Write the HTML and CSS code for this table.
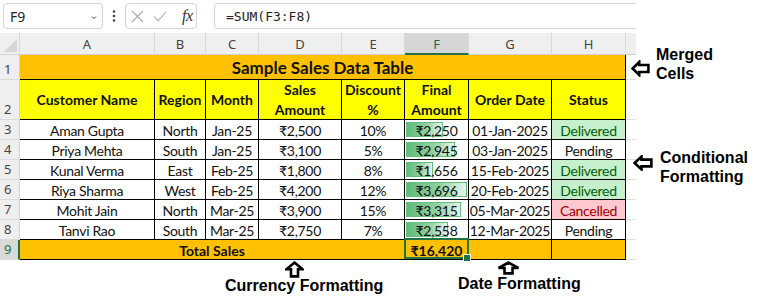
FILE: index.html
```html
<!DOCTYPE html>
<html>
<head>
<meta charset="utf-8">
<link rel="stylesheet" href="styles.css">
</head>
<body>
<div class="page">
  <div class="excel">
    <div class="fbar">
      <div class="namebox">
        <span class="nb-text">F9</span>
        <svg class="nb-caret" width="6" height="5" viewBox="0 0 6 5"><path d="M1 1.5 L3 3.5 L5 1.5" fill="none" stroke="#444" stroke-width="1"/></svg>
      </div>
      <div class="kebab">
        <svg width="4" height="12" viewBox="0 0 4 12"><circle cx="2" cy="1.5" r="1.3" fill="#444"/><circle cx="2" cy="6" r="1.3" fill="#444"/><circle cx="2" cy="10.5" r="1.3" fill="#444"/></svg>
      </div>
      <div class="fxbox">
        <svg class="ic-x" width="13" height="13" viewBox="0 0 13 13"><path d="M1 1 L12 12 M12 1 L1 12" stroke="#a8a8a8" stroke-width="1.1" fill="none"/></svg>
        <svg class="ic-ok" width="14" height="11" viewBox="0 0 14 11"><path d="M1 5.5 L5 9.8 L13 1" stroke="#a8a8a8" stroke-width="1.1" fill="none"/></svg>
        <span class="fx">fx</span>
      </div>
      <div class="formula">=SUM(F3:F8)</div>
    </div>

    <div class="sheet">
      <!-- column headers -->
      <div class="corner"><svg width="13" height="13" viewBox="0 0 13 13"><path d="M13 0 L13 13 L0 13 Z" fill="#d6d6d6"/></svg></div>
      <div class="ch">A</div>
      <div class="ch">B</div>
      <div class="ch">C</div>
      <div class="ch">D</div>
      <div class="ch">E</div>
      <div class="ch ch-sel">F</div>
      <div class="ch">G</div>
      <div class="ch">H</div>
      <div class="ch ch-i"></div>

      <!-- row 1 -->
      <div class="rh">1</div>
      <div class="title">Sample Sales Data Table</div>
      <div class="gi"></div>

      <!-- row 2 -->
      <div class="rh">2</div>
      <div class="c hd">Customer Name</div>
      <div class="c hd">Region</div>
      <div class="c hd">Month</div>
      <div class="c hd">Sales<br>Amount</div>
      <div class="c hd">Discount<br>%</div>
      <div class="c hd">Final<br>Amount</div>
      <div class="c hd">Order Date</div>
      <div class="c hd">Status</div>
      <div class="gi"></div>

      <!-- row 3 -->
      <div class="rh">3</div>
      <div class="c d">Aman Gupta</div>
      <div class="c d">North</div>
      <div class="c d">Jan-25</div>
      <div class="c d">₹2,500</div>
      <div class="c d">10%</div>
      <div class="c d fb"><span class="bar" style="width:37px"></span><span class="val">₹2,250</span></div>
      <div class="c d">01-Jan-2025</div>
      <div class="c d ok">Delivered</div>
      <div class="gi"></div>

      <!-- row 4 -->
      <div class="rh">4</div>
      <div class="c d">Priya Mehta</div>
      <div class="c d">South</div>
      <div class="c d">Jan-25</div>
      <div class="c d">₹3,100</div>
      <div class="c d">5%</div>
      <div class="c d fb"><span class="bar" style="width:49px"></span><span class="val">₹2,945</span></div>
      <div class="c d">03-Jan-2025</div>
      <div class="c d">Pending</div>
      <div class="gi"></div>

      <!-- row 5 -->
      <div class="rh">5</div>
      <div class="c d">Kunal Verma</div>
      <div class="c d">East</div>
      <div class="c d">Feb-25</div>
      <div class="c d">₹1,800</div>
      <div class="c d">8%</div>
      <div class="c d fb"><span class="bar" style="width:27px"></span><span class="val">₹1,656</span></div>
      <div class="c d">15-Feb-2025</div>
      <div class="c d ok">Delivered</div>
      <div class="gi"></div>

      <!-- row 6 -->
      <div class="rh">6</div>
      <div class="c d">Riya Sharma</div>
      <div class="c d">West</div>
      <div class="c d">Feb-25</div>
      <div class="c d">₹4,200</div>
      <div class="c d">12%</div>
      <div class="c d fb"><span class="bar" style="width:61px"></span><span class="val">₹3,696</span></div>
      <div class="c d">20-Feb-2025</div>
      <div class="c d ok">Delivered</div>
      <div class="gi"></div>

      <!-- row 7 -->
      <div class="rh">7</div>
      <div class="c d">Mohit Jain</div>
      <div class="c d">North</div>
      <div class="c d">Mar-25</div>
      <div class="c d">₹3,900</div>
      <div class="c d">15%</div>
      <div class="c d fb"><span class="bar" style="width:55px"></span><span class="val">₹3,315</span></div>
      <div class="c d">05-Mar-2025</div>
      <div class="c d bad">Cancelled</div>
      <div class="gi"></div>

      <!-- row 8 -->
      <div class="rh">8</div>
      <div class="c d">Tanvi Rao</div>
      <div class="c d">South</div>
      <div class="c d">Mar-25</div>
      <div class="c d">₹2,750</div>
      <div class="c d">7%</div>
      <div class="c d fb"><span class="bar" style="width:42px"></span><span class="val">₹2,558</span></div>
      <div class="c d">12-Mar-2025</div>
      <div class="c d">Pending</div>
      <div class="gi"></div>

      <!-- row 9 -->
      <div class="rh rh-sel">9</div>
      <div class="c tot">Total Sales</div>
      <div class="c tsel">₹16,420</div>
      <div class="c torg"></div>
      <div class="c torg"></div>
      <div class="gi"></div>
    </div>
  </div>

  <!-- annotations -->
  <div class="note note-merged">Merged<br>Cells</div>
  <svg class="arrow arrow-merged" width="19" height="17" viewBox="0 0 19 17"><polygon points="1.6,8.5 8.2,2 8.2,5 17.4,5 17.4,12 8.2,12 8.2,15" fill="#fff" stroke="#000" stroke-width="2.6" stroke-linejoin="miter"/></svg>

  <div class="note note-cond">Conditional<br>Formatting</div>
  <svg class="arrow arrow-cond" width="20" height="16" viewBox="0 0 20 16"><polygon points="1.6,8 8.5,1.6 8.5,4.6 18.4,4.6 18.4,11.4 8.5,11.4 8.5,14.4" fill="#fff" stroke="#000" stroke-width="2.6"/></svg>

  <svg class="arrow arrow-cur" width="19" height="17" viewBox="0 0 19 17"><polygon points="9.5,1.6 17.4,8.2 13,8.2 13,15.4 6,15.4 6,8.2 1.6,8.2" fill="#fff" stroke="#000" stroke-width="2.6"/></svg>
  <div class="note note-cur">Currency Formatting</div>

  <svg class="arrow arrow-date" width="23" height="14" viewBox="0 0 23 14"><polygon points="11.5,1.6 21.4,7 15.5,7 15.5,12.4 7.5,12.4 7.5,7 1.6,7" fill="#fff" stroke="#000" stroke-width="2.6"/></svg>
  <div class="note note-date">Date Formatting</div>
</div>
</body>
</html>
```

FILE: styles.css
```css
* { box-sizing: border-box; }

html, body {
  margin: 0;
  padding: 0;
  background: #fff;
}

.page {
  position: relative;
  width: 757px;
  height: 301px;
  overflow: hidden;
  background: #fff;
}

.excel {
  width: 636px;
  overflow: hidden;
  background: #fff;
  padding-bottom: 2px;
}

/* ---------- formula bar ---------- */
.fbar {
  height: 33px;
  display: flex;
  align-items: flex-start;
  padding-top: 3px;
  font-family: "Noto Sans", "Open Sans", sans-serif;
  color: #222;
}

.fbar > * { flex-shrink: 0; }

.namebox {
  margin-left: 3px;
  width: 100px;
  height: 26px;
  border: 1px solid #d4d4d4;
  border-radius: 4px;
  display: flex;
  align-items: center;
  justify-content: space-between;
  padding: 0 5px 0 6px;
}

.nb-text {
  font-size: 14px;
  color: #222;
}

.nb-caret {
  margin-top: 3px;
}

.kebab {
  width: 22px;
  height: 26px;
  display: flex;
  align-items: center;
  justify-content: center;
}

.fxbox {
  width: 72px;
  height: 26px;
  border: 1px solid #d4d4d4;
  border-radius: 4px;
  display: flex;
  align-items: center;
  padding-left: 5px;
}

.ic-x { margin-right: 9px; }
.ic-ok { margin-right: 15px; margin-top: 1px; }

.fx {
  font-family: "Liberation Serif", "DejaVu Serif", serif;
  font-style: italic;
  font-size: 16px;
  color: #333;
  letter-spacing: -0.5px;
}

.formula {
  margin-left: 17px;
  width: 440px;
  height: 26px;
  border: 1px solid #d4d4d4;
  border-radius: 4px;
  display: flex;
  align-items: center;
  padding-left: 11px;
  font-family: "DejaVu Sans Mono", "Liberation Mono", monospace;
  font-size: 13px;
  color: #222;
}

/* ---------- sheet ---------- */
.sheet {
  display: grid;
  grid-template-columns: 20px 135px 51px 53px 83px 63px 64px 83px 74px 10px;
  grid-template-rows: 22px 25px 40px repeat(7, 20px);
  font-family: "Lato", "Noto Sans", sans-serif;
  font-size: 14px;
  color: #111;
}

.corner {
  background: #efefef;
  border-right: 1px solid #d6d6d6;
  border-bottom: 1px solid #d6d6d6;
  display: flex;
  align-items: flex-end;
  justify-content: flex-end;
  padding: 0 2px 2px 0;
}

.ch {
  background: #efefef;
  border-right: 1px solid #d9d9d9;
  border-bottom: 1px solid #cfcfcf;
  display: flex;
  align-items: center;
  justify-content: center;
  font-family: "Noto Sans", "Open Sans", sans-serif;
  font-size: 13px;
  color: #444;
  padding-top: 1px;
}

.ch-sel {
  background: #d6d6d6;
  color: #1d6b47;
  border-bottom: 2px solid #217346;
}

.ch-i {
  border-right: none;
}

.rh {
  background: #efefef;
  border-right: 1px solid #d2d2d2;
  border-bottom: 1px solid #dadada;
  display: flex;
  align-items: flex-end;
  padding: 0 0 1px 4px;
  font-family: "Noto Sans", "Open Sans", sans-serif;
  font-size: 13px;
  line-height: 17px;
  color: #444;
}

.rh-sel {
  background: #d9d9d9;
  color: #217346;
  border-right: 2px solid #217346;
}

.gi {
  background: #fff;
  border-bottom: 1px solid #e1e1e1;
}

.title {
  grid-column: span 8;
  background: #ffc000;
  border-right: 1px solid #000;
  border-bottom: 1px solid #000;
  display: flex;
  align-items: center;
  justify-content: center;
  font-weight: 700;
  font-size: 17px;
  color: #111;
}

.c {
  border-right: 1px solid #000;
  border-bottom: 1px solid #000;
  display: flex;
  align-items: center;
  justify-content: center;
  text-align: center;
  white-space: nowrap;
}

.hd {
  background: #ffff00;
  font-weight: 700;
  line-height: 20px;
}

.d {
  background: #fff;
  padding-top: 2px;
  letter-spacing: -0.3px;
}

.ok {
  background: #c6efce;
  color: #006100;
}

.bad {
  background: #ffc7ce;
  color: #9c0006;
}

.fb {
  position: relative;
}

.bar {
  position: absolute;
  left: 1px;
  top: 2px;
  height: 15px;
  border: 1px solid #63be7b;
  background: linear-gradient(90deg, #5fbb79 0%, #8fd0a2 55%, #e6f5eb 100%);
}

.val {
  position: relative;
}

.tot {
  grid-column: span 5;
  background: #ffc000;
  font-weight: 700;
  padding-top: 1px;
}

.tsel {
  position: relative;
  background: #ffc000;
  font-weight: 700;
  padding-top: 1px;
}

.tsel::after {
  content: "";
  position: absolute;
  top: -2px;
  left: -1px;
  right: -1px;
  bottom: 0;
  border: 2px solid #217346;
}

.tsel::before {
  content: "";
  position: absolute;
  right: -3px;
  bottom: -3px;
  width: 6px;
  height: 6px;
  background: #217346;
  border: 1px solid #fff;
  z-index: 2;
}

.torg {
  background: #ffc000;
}

/* ---------- annotations ---------- */
.note {
  position: absolute;
  font-family: "Liberation Sans", Arial, sans-serif;
  font-weight: 700;
  font-size: 16px;
  color: #000;
  white-space: nowrap;
}

.note-merged { left: 656px; top: 46px; line-height: 18.5px; }
.note-cond   { left: 660px; top: 148px; line-height: 19px; }
.note-cur    { left: 225px; top: 277px; line-height: 18px; }
.note-date   { left: 458px; top: 275px; line-height: 18px; }

.arrow { position: absolute; }
.arrow-merged { left: 631px; top: 60px; }
.arrow-cond   { left: 633px; top: 155px; }
.arrow-cur    { left: 285px; top: 261px; }
.arrow-date   { left: 497px; top: 261px; }
```
